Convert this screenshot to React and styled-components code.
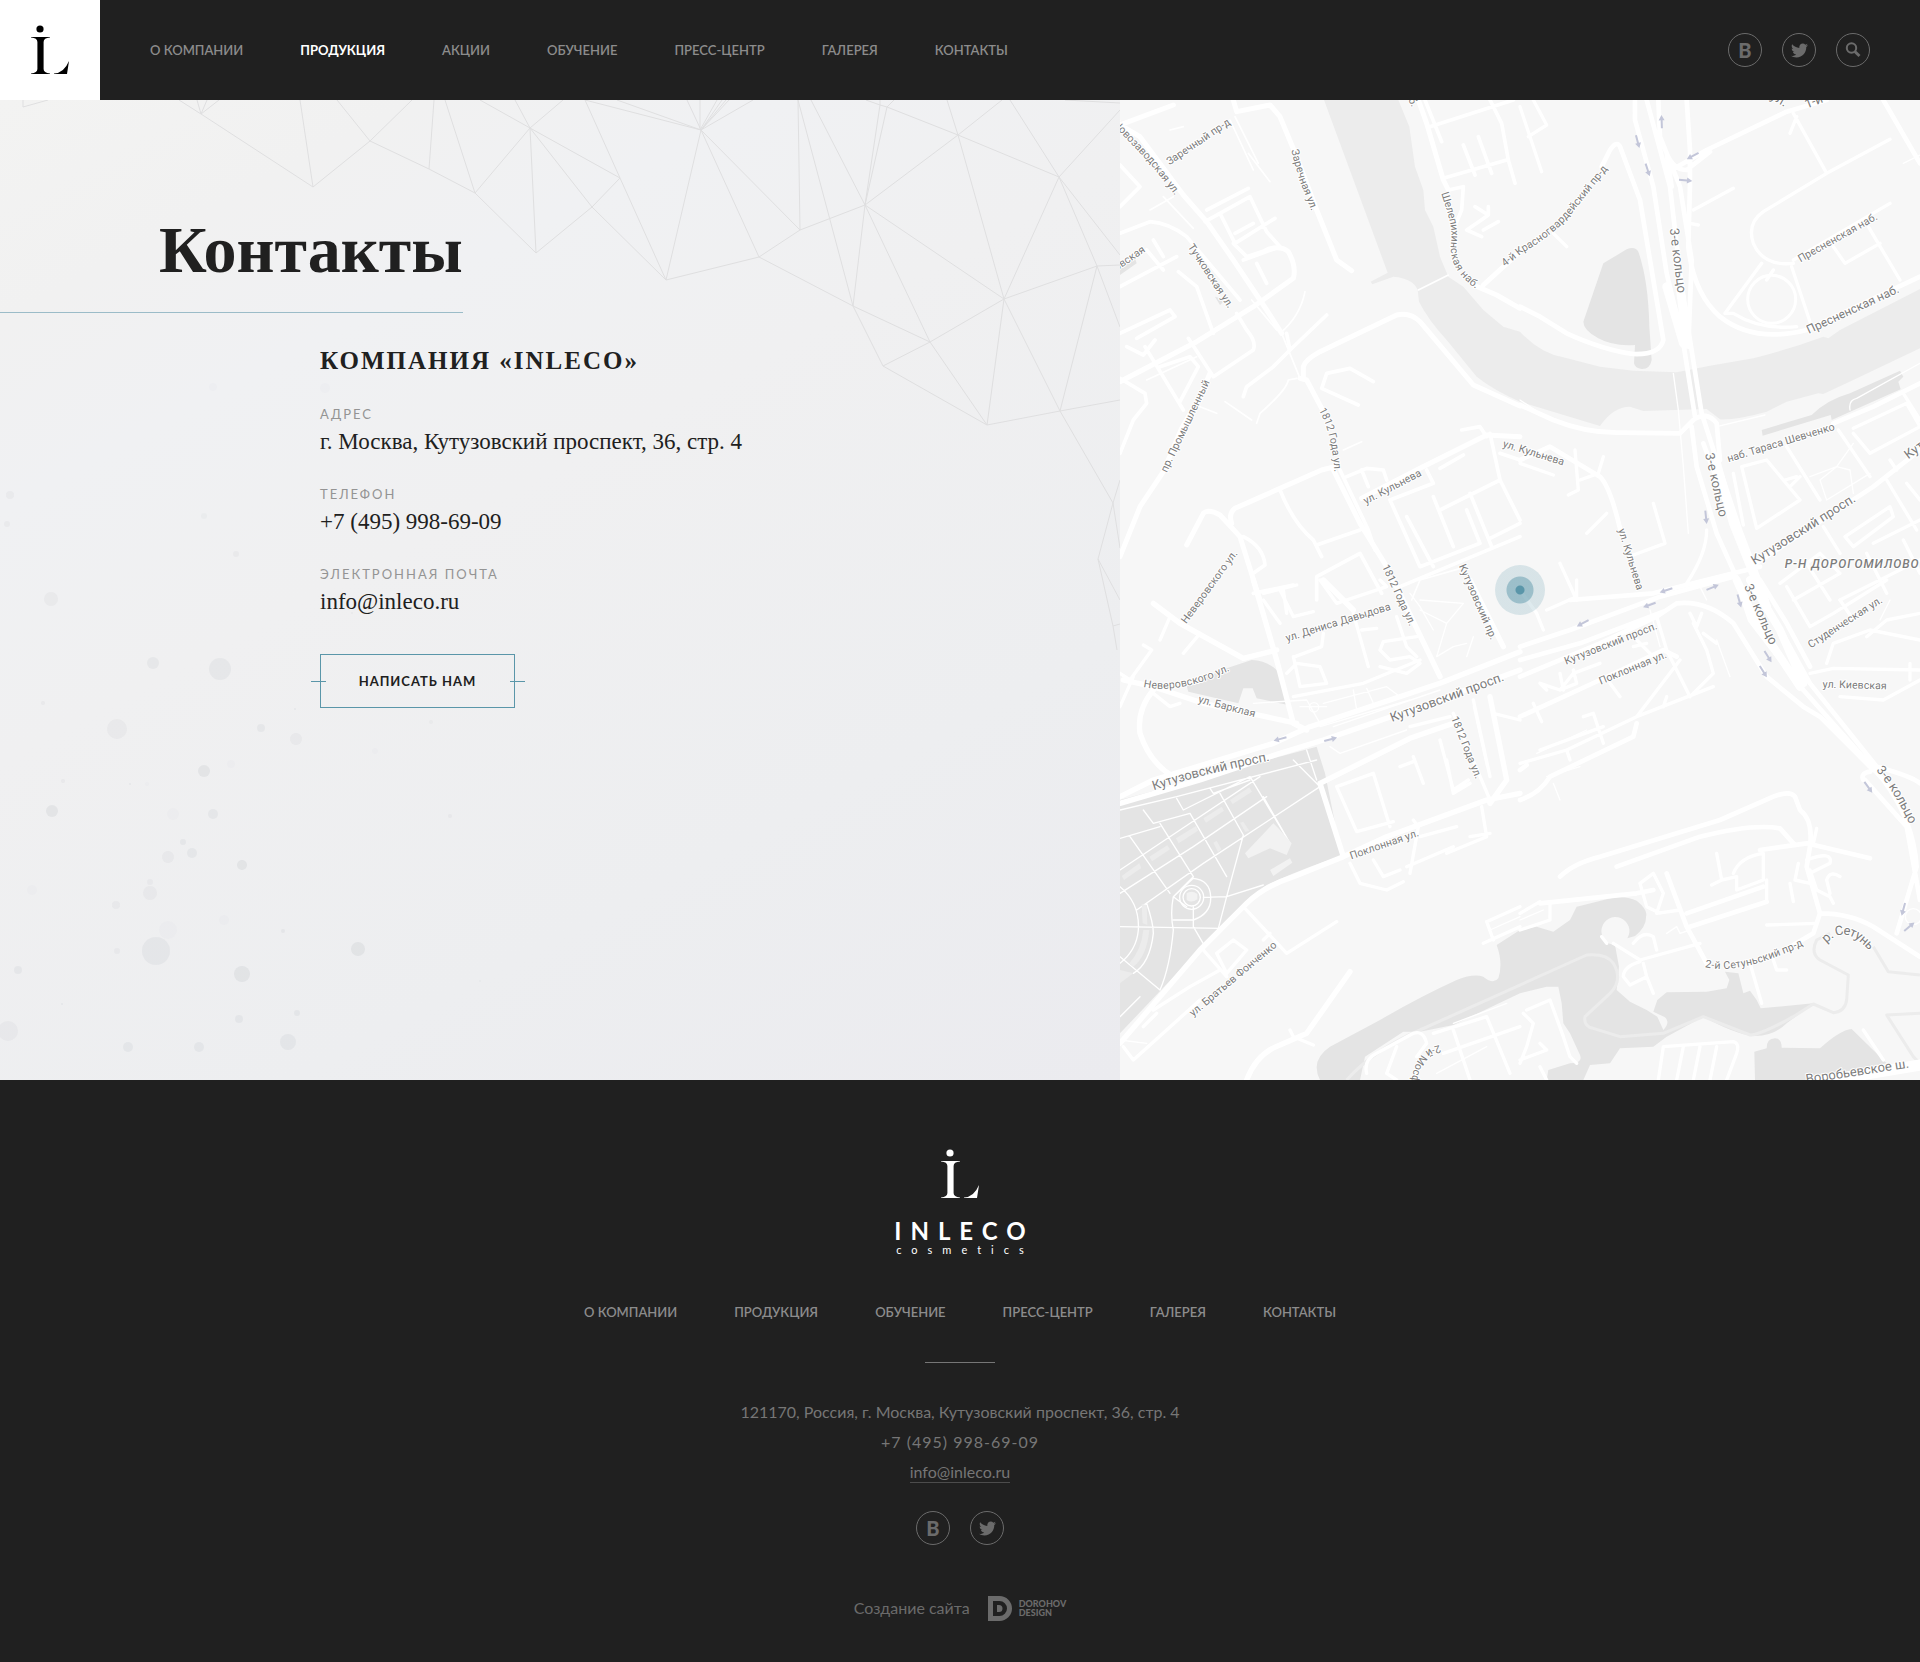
import React from "react";
import styled, { createGlobalStyle, css } from "styled-components";
import { FaTwitter } from "react-icons/fa";

const sans = `Lato, "Open Sans", sans-serif`;
const serif = `"Liberation Serif", "DejaVu Serif", serif`;
const dark = "#202020";
const teal = "#5a96a9";

const GlobalStyle = createGlobalStyle`
  * { box-sizing: border-box; }
  body { margin: 0; background: ${dark}; font-family: ${sans}; color: ${dark}; }
  a { color: inherit; text-decoration: none; }
`;

/* ---------- header ---------- */

const Header = styled.header`
  display: flex;
  align-items: center;
  height: 100px;
  padding-right: 50px;
  background: ${dark};
`;

const HeaderLogo = styled.a`
  display: flex;
  align-items: center;
  justify-content: center;
  width: 100px;
  height: 100px;
  background: #fff;
  color: #000;
`;

const Nav = styled.nav`
  display: flex;
  flex-wrap: wrap;
  gap: 57px;
  margin-left: ${(p) => (p.$header ? "50px" : "0")};
`;

const NavLink = styled.a`
  font-size: 13px;
  line-height: 20px;
  font-weight: ${(p) => (p.$active ? 700 : 600)};
  text-transform: uppercase;
  color: ${(p) => (p.$active ? "#fff" : "#8c8c8c")};
`;

const Socials = styled.div`
  display: flex;
  gap: 20px;
  margin-left: ${(p) => (p.$push ? "auto" : "0")};
`;

const round = css`
  display: flex;
  align-items: center;
  justify-content: center;
  width: 34px;
  height: 34px;
  padding: 0;
  border: 1px solid #6b6b6b;
  border-radius: 50%;
  background: none;
  color: #6b6b6b;
`;
const RoundLink = styled.a`${round}`;
const RoundButton = styled.button`${round} cursor: pointer;`;

const LetterMark = styled.span`
  font: 900 20px/20px ${sans};
`;

/* ---------- contacts ---------- */

const Main = styled.main`
  display: grid;
  grid-template-columns: 7fr 5fr;
`;

const Contacts = styled.section`
  position: relative;
  overflow: hidden;
  padding: 110px 0 372px;
  background: linear-gradient(152deg, #f3f3f2 0%, #f1f1f1 14%, #f0f1f3 26%, #f0f0f1 42%, #edeef0 72%, #ebebef 100%);
`;

const Backdrop = styled.svg`
  position: absolute;
  inset: 0;
  width: 100%;
  height: 100%;
`;

const TitleBar = styled.div`
  position: relative;
  display: inline-block;
  padding: 0 0 22px 159px;
  border-bottom: 1px solid #9bbcc8;
`;

const Title = styled.h1`
  margin: 0;
  font: 700 66px/80px ${serif};
`;

const Details = styled.div`
  position: relative;
  padding: 33px 0 0 320px;
`;

const Company = styled.h2`
  margin: 0 0 28px;
  font: 700 25px/30px ${serif};
  letter-spacing: 2px;
  text-transform: uppercase;
`;

const Fields = styled.dl`
  display: grid;
  gap: 27px;
  margin: 0 0 37px;
`;

const FieldName = styled.dt`
  margin-bottom: 3px;
  font-size: 13px;
  line-height: 20px;
  letter-spacing: 2px;
  text-transform: uppercase;
  color: #949494;
`;

const FieldValue = styled.dd`
  margin: 0;
  font: 400 23px/30px ${serif};
`;

const WriteButton = styled.button`
  position: relative;
  width: 195px;
  height: 54px;
  padding: 0;
  border: 1px solid ${teal};
  background: none;
  color: ${dark};
  font: 700 13px/20px ${sans};
  letter-spacing: 1px;
  text-transform: uppercase;
  cursor: pointer;
  &::before,
  &::after {
    content: "";
    position: absolute;
    top: 26px;
    width: 15px;
    height: 1px;
    background: ${teal};
  }
  &::before { left: -10px; }
  &::after { right: -11px; }
`;

/* ---------- map ---------- */

const MapPanel = styled.section`
  position: relative;
  overflow: hidden;
  background: #f7f7f7;
`;

const MapDrawing = styled.svg`
  position: absolute;
  inset: 0;
  width: 100%;
  height: 100%;
`;

const Roads = styled.path`
  fill: none;
  stroke: #fff;
  stroke-width: ${(p) => p.$w};
  stroke-linecap: round;
  stroke-linejoin: round;
`;

const StreetName = styled.text`
  font-family: Roboto, sans-serif;
  font-size: ${(p) => p.$size}px;
  font-style: ${(p) => (p.$district ? "italic" : "normal")};
  font-weight: ${(p) => (p.$district ? 500 : 400)};
  letter-spacing: ${(p) => (p.$district ? "3px" : "normal")};
  fill: #7c7c7c;
  stroke: #fff;
  stroke-width: 6px;
  stroke-linejoin: round;
  paint-order: stroke;
`;

const Pin = styled.div`
  position: absolute;
  left: 50%;
  top: 50%;
  width: 50px;
  height: 50px;
  margin: -25px 0 0 -25px;
  border-radius: 50%;
  background: radial-gradient(circle, ${teal} 0 4px, rgba(90, 150, 169, 0.58) 5px 13px, rgba(90, 150, 169, 0.2) 14px);
`;

/* ---------- footer ---------- */

const Footer = styled.footer`
  display: flex;
  flex-direction: column;
  align-items: center;
  padding: 69px 20px 38px;
  background: ${dark};
  color: #767676;
`;

const FooterLogo = styled.a`
  display: flex;
  flex-direction: column;
  align-items: center;
  color: #fff;
`;

const Wordmark = styled.span`
  margin: 18px 0 0 9px;
  font: 700 24px/28px ${sans};
  letter-spacing: 9px;
`;

const Tagline = styled.span`
  margin-left: 10px;
  font: 400 11px/10px ${sans};
  letter-spacing: 10px;
`;

const FooterNavWrap = styled.div`
  margin-top: 47px;
`;

const Rule = styled.hr`
  width: 70px;
  height: 1px;
  margin: 40px 0 34px;
  border: 0;
  background: #767676;
`;

const Address = styled.address`
  display: flex;
  flex-direction: column;
  align-items: center;
  margin-bottom: 28px;
  font-size: 16px;
  line-height: 30px;
  font-style: normal;
`;

const Phone = styled.span`
  letter-spacing: 1px;
`;

const MailLink = styled.a`
  height: 22px;
  margin-top: 4px;
  line-height: 22px;
  border-bottom: 1px solid #4c4c4c;
`;

const Credit = styled.a`
  display: flex;
  align-items: center;
  gap: 18px;
  margin-top: 49px;
  font-size: 16px;
  line-height: 28px;
  color: #6b6b6b;
`;

const Studio = styled.span`
  display: flex;
  align-items: center;
  gap: 7px;
  font: 900 9px/9px ${sans};
`;

/* ---------- drawings ---------- */

const Monogram = () => (
  <svg width="40" height="50" viewBox="0 0 40 50" fill="currentColor" aria-hidden="true">
    <circle cx="10" cy="4" r="3.6" />
    <path d="M1 12 H20 V12.6 Q13.6 13 13.6 17 V44 Q13.6 48 20 48.4 V49 H1 V48.4 Q7.4 48 7.4 44 V17 Q7.4 13 1 12.6Z" />
    <path d="M24 48.5 Q34 48 39 36 L37 49 H24Z" />
  </svg>
);

const SearchIcon = () => (
  <svg width="16" height="16" viewBox="0 0 16 16" fill="none" stroke="currentColor" aria-hidden="true">
    <circle cx="6.5" cy="6" r="4.7" strokeWidth="2" />
    <path d="M9.8 9.5 L14.5 14" strokeWidth="3" />
  </svg>
);

const StudioMark = () => (
  <svg width="24" height="25" viewBox="0 0 24 25" fill="currentColor" fillRule="evenodd" aria-hidden="true">
    <path d="M0 0 H11.5 A12.5 12.5 0 0 1 11.5 25 H0Z M5 5 V20 H11.5 A7.5 7.5 0 0 0 11.5 5Z M9 9 H11 A3.5 3.5 0 0 1 11 16 H9Z" />
  </svg>
);

const mesh = `
M23 100V107L48 100 M179 100L201 114L313 187L370 141L429 169L475 193L536 253L592 207L666 280L759 257L853 306L883 366L987 425L1060 411L1113 503L1098 559L1113 626L1117 650
M197 100L201 114L207 100 M219 100L201 114 M300 100L313 187 M337 100L370 141L412 100 M434 100L429 169 M445 100L475 193L530 128L563 100
M480 100L530 128L515 100 M530 128L536 253 M530 128L592 207L620 178Z M585 100L620 178L666 280L701 130Z M617 100L701 130L687 100 M700 100V130L717 100 M722 100L701 130L726 100 M729 100L701 130L753 100
M701 130L759 257L800 230Z M798 100L800 230L865 205L853 306Z M811 100L865 205L880 105V100 M865 205L887 107L894 100 M865 205L958 135L1002 100 M866 100L880 105L887 107L958 135L1059 177L1120 110
M947 100L958 135L1004 299L1059 177L1010 100 M865 205L930 342L1004 299Z M853 306L930 342L883 366 M930 342L987 425L1004 299L1060 411L1097 266L1059 177L1120 255 M1004 299L1097 266L1120 265 M1097 266L1120 327
M1060 411L1120 400 M1065 100L1120 103 M1120 480L1113 503L1120 548 M1098 559L1120 600 M1113 626L1120 624`;

const bubbles = [
  [10, 495, 4, 3], [7, 524, 3, 3], [204, 516, 3, 2], [236, 554, 3, 3], [51, 599, 7, 3], [153, 663, 6, 4],
  [220, 669, 11, 4], [43, 703, 2, 3], [117, 729, 10, 3], [261, 728, 4, 4], [296, 739, 6, 3], [295, 709, 1, 4],
  [204, 771, 6, 5], [231, 764, 4, 1], [63, 781, 2, 3], [130, 784, 1, 4], [147, 784, 2, 1], [52, 811, 6, 5],
  [213, 814, 5, 4], [183, 842, 3, 4], [192, 853, 5, 4], [168, 857, 6, 3], [242, 865, 5, 5], [150, 882, 3, 3],
  [150, 893, 7, 3], [116, 905, 4, 3], [283, 931, 2, 4], [156, 951, 14, 4], [117, 951, 3, 3], [18, 970, 4, 4],
  [358, 949, 7, 5], [242, 974, 8, 5], [62, 1004, 1, 4], [8, 1031, 10, 3], [239, 1019, 4, 4], [297, 1013, 3, 4],
  [128, 1047, 5, 4], [199, 1047, 5, 4], [288, 1042, 8, 4], [450, 816, 2, 3], [375, 751, 3, 1], [431, 722, 2, 2],
  [352, 613, 1, 3], [480, 981, 1, 2], [173, 814, 6, 1], [168, 930, 9, 1], [32, 890, 5, 1], [224, 920, 5, 1], [213, 387, 4, 1], [325, 388, 5, 1],
];

/* Each quarter of the map: offset, then road paths by stroke width. */
const quarters = [
  {
    at: "0 0",
    roads: [
      [15, `M0 75L60 110L190 285L260 365L340 480L440 630L485 700 M340 0L350 35L450 15L480 50L530 170L590 330L650 480L695 512 M0 75L160 15
        M895 0L920 70L970 240L985 270 M1060 555L1130 585L1200 625 M550 835L550 800Q555 780 600 755L830 645Q870 635 900 665L1060 855L1200 918 M540 835L560 840L605 925
        M270 820L240 890L185 985L130 1115L60 1220L0 1370 M0 845L230 725L400 620L520 535Q530 500 505 455Q480 435 440 450
        M640 1110L720 1270L800 1400 M645 1100L605 1110L345 1225Q325 1240 335 1270 M200 1335L250 1240Q265 1225 300 1245L360 1310L410 1470L420 1500 M725 1195L900 1105L1100 1005L1200 1010 M1090 555L1200 455`],
      [11, `M660 1110L745 1290L765 1350 M930 80L1180 0 M970 235L1160 180 M1110 0L1145 70L1165 180L1185 250 M1030 135L1065 225 M1075 110L1115 220 M915 0L965 125
        M985 270L1030 260L1025 330L1000 390 M1065 320L1105 345L1070 370L1040 390L1085 410 M1105 345V320 M1090 390L1135 365
        M0 700L150 630L165 650L50 715 M20 740L70 765L105 720 M0 835L75 880L80 910L40 960L0 1060 M75 740L190 930 M205 715L280 830L400 750Q410 725 380 690L350 640
        M120 800L210 770L235 800L180 905 M0 400L90 365Q150 370 200 410L360 600 M0 560L170 470 M80 450L130 510 M175 515L230 560L280 700 M100 420L130 470
        M255 365L390 290L440 395L480 440 M300 340L345 430L465 355 M340 430L380 470L440 450 M345 400L400 370 M370 480L480 440 M410 490L440 550 M260 330L385 265
        M0 195L60 260L0 320 M480 1170Q520 1270 580 1320L605 1370 M590 1335L720 1290 M590 1500L590 1430L720 1360L785 1480 M370 1310Q430 1340 435 1395L400 1420
        M370 890L380 860L460 800L510 750L620 645 M500 700L510 750 M760 845L690 805L620 820L605 865L715 915 M680 1130L740 1105L790 1110L800 1140 M725 1110L745 1160
        M810 1200L900 1400L1080 1330L1040 1230 M810 1200L940 1150L920 1110 M940 1190L1000 1340 M1050 1180L1115 1340 M960 1230L1140 1140L1110 1000 M1025 990L1080 980L1100 1010 M1140 1060L1200 1080 M1110 1315L1200 1270 M1140 1140L1200 1260
        M840 1460L1200 1310 M960 1105L1030 1065 M400 1480L520 1455 M860 1250L940 1400`],
      [5, `M330 60L400 210 M345 50L415 190 M385 160L450 245 M150 90L190 80 M130 290L220 385 M480 700Q540 650 555 575 M485 700L540 835 M410 970L420 940Q500 870 505 840L530 835
        M315 905L395 960 M895 570L985 525 M240 920L290 940 M875 1500L900 1440L1040 1400 M80 840L230 770 M670 1050L725 1025 M90 330L160 290 M395 600L470 690`],
    ],
  },
  {
    at: "1200 0",
    roads: [
      [26, `M590 1090L640 1270L740 1520 M440 560L490 730 M480 560L500 720`],
      [14, `M345 0V60L400 260L440 520L490 730L525 950 M380 0L450 260L480 520L510 720L545 940L590 1080L660 1290L740 1500 M415 0L420 110L480 260L515 480L505 740
        M500 0L510 150L510 250L505 440Q520 580 600 650Q700 730 860 690L1200 530 M455 210L560 150L800 35L920 0 M455 260L440 160Q460 210 500 210L570 155
        M0 620L60 650L140 700Q250 750 340 762Q420 765 430 720L360 300L300 140Q290 120 270 150L245 200 M0 915L100 960Q200 1000 300 998L480 1000L520 960Q560 930 590 970L600 1080
        M515 980L530 1100L590 1300L680 1500 M550 1030L640 1270 M700 1395L1060 1160L1200 1050 M150 1500L400 1480L640 1420L720 1400
        M940 970L1060 920L1200 850 M0 1080L90 1040L240 1130Q270 1160 300 1285 M860 0L1000 -30 M1090 0L1200 190`],
      [10, `M820 40L920 220L1110 118 M920 220L730 335Q680 370 700 430Q730 500 820 490 M520 330L640 265 M510 370L535 375 M725 490L615 640L640 640Q720 690 830 680 M760 510L740 540 M815 500L875 680
        M940 440L975 490L1080 430 M1045 380L1140 540 M820 480L1110 310 M830 50L810 100 M0 20L65 215 M40 0L80 75L25 110 M100 400L140 440 M165 1050L175 1170L145 1185 M250 1070L235 1120L180 1140
        M0 1090L100 1125 M400 1210L435 1330L340 1365 M120 1390L170 1500 M560 1290Q560 1360 500 1450 M665 1100L740 1080L840 1200L710 1285Z M640 1120L670 1275 M800 1040L900 1200 M795 1140L830 1130 M810 1160L840 1130
        M955 990L1050 1130 M1000 1000L1050 1060L1200 980L1160 910L1000 985 M1110 1080L1130 1110 M975 1310L1110 1220L1120 1250L1000 1340Z M1060 1330L1200 1260 M780 1450L900 1360L960 1420L820 1500 M910 1280L960 1360 M960 1500L1200 1380 M1100 1140L1190 1290 M1150 880L1200 960 M1160 1150L1200 1200
        M1040 1360L1100 1480 M1150 1320L1200 1420 M860 1390L930 1500 M200 1300L260 1240`],
      [4, `M460 820L475 930L490 1100L505 1300 M590 980L735 945 M990 930Q985 900 1010 895L1200 790 M870 1130L950 1100L1000 1030 M950 1100L900 1140L920 1200 M950 1100L990 1110L1000 1180 M920 1200L1050 1120 M1150 190L1200 165 M0 900L60 940`],
    ],
    rings: [[755, 598, 72]],
  },
  {
    at: "0 1440",
    roads: [
      [16, `M0 650L100 600L460 490L570 440L960 310L1200 215 M0 670L240 600L480 520L610 480L900 380L1200 270 M100 70L180 130L370 235L470 210 M400 0L470 240L520 430L560 450
        M0 1390L240 1110L380 970Q430 920 520 890L670 830L800 770L1100 660L1200 640 M600 610L670 830 M600 610L870 475L1000 430 M10 300L100 320L250 370L530 430
        M100 330Q50 390 60 460Q90 550 160 590 M820 0L960 290 M610 0L700 90 M1110 350L1160 600L1110 670 M1050 0L1150 200 M380 1500Q410 1420 480 1395L560 1360L690 1175`],
      [10, `M100 340L150 380L180 370 M190 220L240 160 M120 180L150 110 M0 280L30 300L95 210L70 195 M430 40L530 15 M430 60L480 130 M480 30L520 110L580 95 M490 30L500 100 M600 0L650 70L800 20L780 0 M700 100L745 260 M725 150L770 145
        M525 230L605 200L610 160 M500 280L530 250L600 260L620 310L540 320L520 230 M780 210L790 185L890 170 M780 210L810 240L870 230L900 250L860 280L780 260 M830 110L860 200L890 230 M520 350L730 310L900 240
        M650 620L760 580L810 740 M650 620L710 755L820 725 M880 530L910 610 M840 560L880 545 M1000 400L1110 660 M960 480L1000 630L1045 600 M870 440L990 410 M980 540L1000 640L1050 610
        M1060 360L1110 590 M1120 400L1200 420 M870 880L895 740L880 720 M860 860L1000 800 M690 850L720 910L800 930L850 905 M760 840L790 890L840 870 M900 770L1010 740 M980 820L1100 770L1085 680 M1050 770L1110 760
        M370 980L500 1120L650 1025 M290 1120L340 1080L380 1110L320 1180L290 1120 M250 1110L320 1190 M100 1290L210 1220L300 1170 M10 1400L40 1440L240 1260 M70 1340L110 1300 M430 1080L450 1060 M510 1350L520 1370L580 1395
        M1090 1090L1200 1040 M1100 1025L1200 980 M1100 1025L1120 1080 M740 1480Q730 1440 770 1420L880 1360Q910 1350 920 1390L890 1430 M830 1400L800 1480L830 1500 M940 1360L1100 1310L1170 1480 M1000 1350L1050 1500 M970 1420L1200 1340 M0 380L40 290`],
      [4, `M0 690L170 650L590 540 M70 690L100 730L210 700L320 890 M170 655L190 690L390 590L510 790 M270 625L280 640L390 600 M120 730L220 890L160 950Q150 1000 160 1050Q150 1160 120 1230
        M0 775L120 740 M30 770L150 940 M0 870L180 750L420 590 M0 940L220 800L440 650 M50 990L250 850L600 620 M300 640L370 765L320 950L295 1045 M0 920Q60 970 55 1050Q50 1110 0 1150 M80 970Q100 1030 100 1060Q90 1150 40 1180 M0 1040L300 1045
        M160 1020L220 1020Q275 1000 272 950Q270 900 220 895L160 950L200 980 M220 980V1040L255 1100 M250 952L320 950L430 915 M0 1130L120 1230 M0 1310L60 1250 M520 540L600 620 M560 510L590 600 M430 650L510 790
        M400 370L560 360L600 430 M540 380H620 M610 370L800 320L840 350 M700 330L710 390 M740 325L760 370 M640 440L960 330 M630 500L660 520L860 450 M870 40L900 80L940 150 M900 60L1030 70 M900 90L980 130L950 230L1000 200L1040 190 M1030 70L980 130 M1060 170L1040 230
        M950 1480L1100 1400 M1000 1330L1160 1270 M600 440L870 360 M1060 380L1100 560 M0 1380L80 1390 M1110 1050L1200 1010`],
    ],
    rings: [[215, 952, 36], [215, 952, 26], [582, 382, 14]],
  },
  {
    at: "1200 1440",
    roads: [
      [34, `M870 1510L1200 1455`],
      [24, `M650 0L700 110L840 320 M690 0L780 150L850 310`],
      [14, `M0 200L150 150L420 50L640 -10 M0 240L180 190L430 95 M0 290L240 190L410 110L470 70Q560 60 640 130L740 290L850 380L900 410L1060 570 M650 0L690 120L850 330L1090 600Q1180 720 1190 860L1130 1060
        M700 0L870 310L1070 560Q1180 590 1200 610 M1030 600Q1020 580 1050 575 M1035 600L1160 740L1200 960 M720 0L800 130L870 260 M0 410L240 300L430 210L470 230 M120 890Q160 850 240 830L600 720L760 650Q810 630 825 650L840 690Q880 720 870 800
        M290 860L540 770Q700 730 780 745L820 790 M510 1040L740 965 M440 880L500 1040L560 1150 M500 1000L730 920 M720 810L860 790L1050 835 M870 800L860 860L900 1000Q990 1000 1060 1040L1200 1130 M900 1000L880 1060L820 1095
        M60 970L350 940L400 930 M0 660Q60 640 90 590L340 470L350 430 M0 570L20 555`],
      [10, `M0 550L140 510L350 410L580 320 M350 410L480 240 M410 110L440 210L510 350 M520 130L560 210L580 280L510 350 M510 100L530 140L545 100 M550 160L590 190 M430 380L440 350 M0 30L50 100L70 150 M170 0V50L80 90 M60 310L120 330L160 280L240 250 M60 310L80 330 M120 280L130 330 M160 270L170 310L120 330
        M190 410L220 400L250 490 M60 510L250 440 M140 510L150 540 M270 310L300 350 M40 370L65 425 M340 200L380 190 M350 180L390 220 M800 20L870 140L940 100L1100 0 M870 280L940 265L1200 270 M960 350L1090 360L1200 300 M920 250L940 190L1050 150L1200 180 M1040 170L1100 120L1200 100 M960 60L1000 120 M1170 250V300
        M590 820L605 900L575 915 M605 900L650 890L650 930L730 900V820Q660 830 640 880 M740 900L740 960 M835 850L825 900L870 910 M810 910L820 965 M870 870L890 930L930 950L940 970 M860 840Q940 810 930 850L870 880 M960 890Q930 870 920 900L930 940 M740 1035L890 1030 M890 745L880 790
        M360 910L400 880L430 940L410 1000L480 990 M360 910L380 980L420 1000 M440 880L460 930 M280 1090L360 1140L540 1090 M310 1190Q310 1160 360 1145 M310 1190L330 1215L380 1190L400 1240 M370 1150L380 1190 M340 1090Q370 1050 400 1070L410 1110 M245 1070L260 1090
        M690 1150L725 1270 M760 1140L770 1170H800 M20 1290L90 1260L130 1370L150 1430L170 1450 M10 1300L40 1330L20 1400L0 1450 M60 1390L80 1410L0 1440 M60 1460L80 1500 M415 1500L430 1400L640 1385Q660 1390 650 1420L620 1500 M490 1400L470 1500 M540 1400L520 1500 M590 1400L570 1500 M1030 1350L1090 1440 M0 1000L60 965 M0 1050L90 1020V970`],
      [4, `M590 180L630 290 M390 90L420 200 M540 20L560 60 M440 1060L470 1040L480 1060L510 1050 M1080 120L1110 60 M0 1020L70 990 M100 610L120 660 M80 590L180 560 M50 520L200 450`],
    ],
    rings: [[1180, 1010, 24]],
  },
];

/* Street name, the line it follows, and its size where it is not the usual one. */
const labels = [
  ["Новозаводская ул.", "M-14 66L100 185L205 320"],
  ["Заречный пр-д", "M142 187L360 40"],
  ["Заречная ул.", "M524 148L548 235L620 420"],
  ["Тучковская ул.", "M212 434L360 660"],
  ["овская", "M-16 504L120 412"],
  ["аб.", "M868 -22L900 50"],
  ["Шелепихинская наб.", "M974 276C990 330 1010 370 1004 430S1030 530 1100 575"],
  ["4-й Красногвардейский пр-д", "M1148 492L1200 450Q1290 400 1345 335L1500 145"],
  ["пр. Промышленный", "M130 1114L275 810"],
  ["1812 Года ул.", "M606 925Q655 1010 655 1160"],
  ["ул. Кульнева", "M732 1204L940 1096"],
  ["1812 Года ул.", "M796 1395L900 1620"],
  ["Кутузовский пр.", "M1026 1394L1150 1680"],
  ["Неверовского ул.", "M190 1566L370 1320"],
  ["ул. Кульнева", "M1150 1030L1400 1106"],
  ["ул. Кульнева", "M1505 1286L1590 1560"],
  ["3-е кольцо", "M1660 385L1692 640", 39],
  ["3-е кольцо", "M1766 1060L1822 1310", 39],
  ["3-е кольцо", "M1882 1454L1990 1700", 39],
  ["3-е кольцо", "M2276 2004Q2345 2080 2410 2240", 39],
  ["Пресненская наб.", "M2036 478L2320 318"],
  ["Пресненская наб.", "M2062 692L2400 536", 36],
  ["наб. Тараса Шевченко", "M1822 1076L2220 955"],
  ["Кутузовский просп.", "M1898 1386L2280 1145", 39],
  ["Кутузовский просп.", "M2358 1070L2600 890", 39],
  ["ул.", "M1955 -14L2050 40", 39],
  ["1-й", "M2056 16L2200 -40", 39],
  ["ул. Дениса Давыдова", "M498 1615Q650 1565 860 1504"],
  ["Неверовского ул.", "M72 1750Q180 1775 350 1690"],
  ["ул. Барклая", "M236 1796L460 1856"],
  ["Кутузовский просп.", "M98 2060Q280 2000 520 1958", 39],
  ["Кутузовский просп.", "M812 1856L1240 1698", 39],
  ["1812 Года ул.", "M1003 1850L1100 2090"],
  ["Поклонная ул.", "M690 2268L950 2178"],
  ["ул. Братьев Фонченко", "M212 2742L520 2484"],
  ["2-й Мосфильмовская ул.", "M962 2846Q890 2860 884 2960V3400"],
  ["Кутузовский просп.", "M1334 1684L1680 1548"],
  ["Поклонная ул.", "M1438 1744L1700 1636"],
  ["Студенческая ул.", "M2066 1636L2340 1460"],
  ["ул. Киевская", "M2108 1752L2400 1760"],
  ["2-й Сетуньский пр-д", "M1757 2590Q1870 2620 2110 2494"],
  ["р. Сетунь", "M2112 2522Q2190 2440 2290 2590", 39],
  ["Воробьевское ш.", "M2058 2940L2440 2880", 39],
];

const arrows = [
  [1625, 65, -92], [1553, 125, 75], [1583, 210, 72], [1718, 168, 152], [1697, 241, 5], [1758, 1252, 84],
  [1638, 1471, 162], [1778, 1462, -22], [1588, 1515, 160], [1388, 1570, 152], [1858, 1503, 74], [1944, 1670, 58],
  [1930, 1715, 58], [480, 1917, 165], [632, 1918, -15], [2245, 2062, 54], [2350, 2428, 105], [2368, 2480, -40],
];

const CityMap = () => (
  <MapDrawing viewBox="0 0 2400 2940" preserveAspectRatio="xMidYMid slice" role="img" aria-label="Карта проезда">
    <g fill="#ececec">
      <path d="M612 0L803 518L752 545L757 553L820 530Q880 535 893 570L897 605Q925 660 980 720L1070 830Q1120 870 1200 905L1440 978Q1480 920 1530 920L1570 933L1760 927L1800 958Q1850 960 1940 935L2000 905L2095 880L2110 882L2200 840L2400 745V567L2160 690L2125 715L2110 710Q2000 750 1900 775L1770 797L1670 817L1540 812L1440 800L1330 772Q1260 760 1200 695L1150 680L1090 630L1030 560L985 530L960 470L940 380L915 330L910 270L885 200L868 80L835 0Z" />
    </g>
    <g fill="#e4e4e4">
      <path d="M1450 490L1520 448Q1545 438 1555 455Q1585 540 1588 680L1595 780Q1590 808 1565 807Q1545 805 1542 790L1545 735Q1480 740 1435 715Q1390 690 1390 665Z" />
      <path d="M1925 990L2075 945Q2120 900 2190 880L2340 812L2350 830L2335 845L2342 868L2135 960L2132 945L1928 1007Z" />
      <path d="M0 500L45 475L50 490L0 525Z M285 590L315 600L300 615Z" />
      <path d="M0 2100L590 1940L615 2020L665 2268Q560 2300 440 2355L370 2410L0 2800Z" />
      <path d="M395 1680Q440 1682 470 1710Q490 1740 505 1815L410 1795L398 1765L370 1765L355 1810L205 1775L200 1758L320 1705Z" />
      <path d="M600 2940Q570 2880 630 2840L780 2760Q900 2690 1010 2640Q1060 2620 1090 2630Q1120 2655 1135 2635Q1150 2590 1130 2535L1200 2490L1250 2480L1300 2495L1350 2460L1370 2420L1490 2390Q1530 2392 1550 2402Q1585 2430 1578 2450Q1580 2480 1545 2508L1522 2515A42 42 0 1 0 1485 2535L1497 2600L1490 2670L1530 2705L1580 2730L1612 2750L1630 2790Q1652 2766 1635 2752L1600 2735L1612 2700L1640 2677L1760 2675L1820 2665L1828 2640L1815 2615L1855 2620L1870 2680L1890 2672L1910 2700L1922 2725L2080 2710L2000 2770Q1960 2810 1900 2808Q1840 2800 1750 2750L1640 2810L1600 2840L1500 2845L1470 2890L1410 2895L1390 2940H1280L1285 2910L1350 2890Q1390 2890 1380 2865L1350 2800L1330 2770L1325 2710L1315 2660H1280L1200 2680L1000 2775L900 2795H850L735 2870L720 2940Z" />
      <path d="M1903 2855L1940 2845Q1940 2815 1965 2815Q1985 2815 1985 2843L2100 2845Q2160 2790 2195 2787L2300 2890L2060 2940H1905Z" />
    </g>
    <path d="M680 2940Q760 2850 900 2790L1400 2565Q1460 2560 1480 2590Q1510 2640 1470 2680L1395 2750Q1390 2780 1420 2785L1500 2810L1630 2800L1750 2750L1890 2805Q1920 2805 2020 2750L2080 2712L2140 2738Q2175 2735 2180 2700L2185 2625L2100 2580Q2070 2560 2090 2520L2130 2500 M2260 2540L2305 2615L2400 2625 M2400 2740L2300 2745L2380 2870L2400 2890" fill="none" stroke="#ececec" strokeWidth="9" strokeLinejoin="round" />
    {quarters.map((q) => (
      <g key={q.at} transform={`translate(${q.at})`}>
        {q.roads.map(([w, d]) => <Roads key={w} $w={w} d={d} />)}
        {(q.rings || []).map(([x, y, r]) => (
          <circle key={x + "-" + r} cx={x} cy={y} r={r} fill="none" stroke="#fff" strokeWidth={r > 50 ? 9 : 4} />
        ))}
      </g>
    ))}
    <g fill="#f2f2f2">
      <path d="M375 2260L460 2170L475 2185L515 2230L500 2265L450 2245L385 2275Z M450 2310L510 2275L517 2288L460 2328Z" />
      <path d="M200 2380Q215 2370 232 2382V2398Q215 2410 200 2400Z" />
    </g>
    <path fill="#ececec" d="M330 2100L388 2062L396 2075L338 2112Z M250 2155L305 2120L312 2132L258 2168Z M168 2215L228 2178L234 2192L176 2230Z M88 2270L142 2236L150 2248L96 2284Z M5 2328L58 2290L64 2304L12 2340Z M360 2168L370 2165L388 2192L376 2196Z M280 2228L290 2222L304 2248L294 2256Z M65 2412L80 2415L82 2475L68 2470Z M70 2490L88 2490Q80 2570 40 2600L28 2590Q64 2550 70 2490Z M0 2610L40 2620L0 2650Z" />
    <g fill="#c3c6d9">
      {arrows.map(([x, y, a]) => (
        <path key={x} transform={`translate(${x} ${y}) rotate(${a})`} d="M-20 -3H4V-9L20 0L4 9V3H-20Z" />
      ))}
    </g>
    <defs>
      {labels.map(([, d], i) => <path key={i} id={`street-${i}`} d={d} />)}
    </defs>
    {labels.map(([name, , size = 32], i) => (
      <StreetName key={i} $size={size} dy="11">
        <textPath href={`#street-${i}`}>{name}</textPath>
      </StreetName>
    ))}
    <StreetName $district $size={36} x="1994" y="1404">Р-Н ДОРОГОМИЛОВО</StreetName>
  </MapDrawing>
);

/* ---------- page ---------- */

const SocialLinks = () => (
  <>
    <RoundLink href="#vk" aria-label="ВКонтакте"><LetterMark>B</LetterMark></RoundLink>
    <RoundLink href="#twitter" aria-label="Twitter"><FaTwitter size={17} /></RoundLink>
  </>
);

const menu = ["О компании", "Продукция", "Акции", "Обучение", "Пресс-центр", "Галерея", "Контакты"];

const fields = [
  ["Адрес", "г. Москва, Кутузовский проспект, 36, стр. 4"],
  ["Телефон", "+7 (495) 998-69-09"],
  ["Электронная почта", <a key="mail" href="mailto:info@inleco.ru">info@inleco.ru</a>],
];

export default function App() {
  return (
    <>
      <GlobalStyle />
      <Header>
        <HeaderLogo href="#home" aria-label="Inleco"><Monogram /></HeaderLogo>
        <Nav $header>
          {menu.map((m) => <NavLink key={m} href="#menu" $active={m === "Продукция"}>{m}</NavLink>)}
        </Nav>
        <Socials $push>
          <SocialLinks />
          <RoundButton type="button" aria-label="Поиск"><SearchIcon /></RoundButton>
        </Socials>
      </Header>
      <Main>
        <Contacts>
          <Backdrop viewBox="0 100 1120 980" preserveAspectRatio="xMinYMin slice" aria-hidden="true">
            <path d={mesh} fill="none" stroke="#dfdfe0" strokeWidth="1" />
            {bubbles.map(([x, y, r, o]) => (
              <circle key={`${x}-${y}`} cx={x} cy={y} r={r} fill="#8a909c" fillOpacity={o * 0.024} />
            ))}
          </Backdrop>
          <TitleBar><Title>Контакты</Title></TitleBar>
          <Details>
            <Company>Компания «Inleco»</Company>
            <Fields>
              {fields.map(([name, value]) => (
                <div key={name}>
                  <FieldName>{name}</FieldName>
                  <FieldValue>{value}</FieldValue>
                </div>
              ))}
            </Fields>
            <WriteButton type="button">Написать нам</WriteButton>
          </Details>
        </Contacts>
        <MapPanel>
          <CityMap />
          <Pin />
        </MapPanel>
      </Main>
      <Footer>
        <FooterLogo href="#home">
          <Monogram />
          <Wordmark>INLECO</Wordmark>
          <Tagline>cosmetics</Tagline>
        </FooterLogo>
        <FooterNavWrap>
          <Nav>
            {menu.filter((m) => m !== "Акции").map((m) => <NavLink key={m} href="#menu">{m}</NavLink>)}
          </Nav>
        </FooterNavWrap>
        <Rule />
        <Address>
          <span>121170, Россия, г. Москва, Кутузовский проспект, 36, стр. 4</span>
          <Phone>+7 (495) 998-69-09</Phone>
          <MailLink href="mailto:info@inleco.ru">info@inleco.ru</MailLink>
        </Address>
        <Socials><SocialLinks /></Socials>
        <Credit href="#studio">
          Создание сайта
          <Studio><StudioMark /><span>DOROHOV<br />DESIGN</span></Studio>
        </Credit>
      </Footer>
    </>
  );
}
